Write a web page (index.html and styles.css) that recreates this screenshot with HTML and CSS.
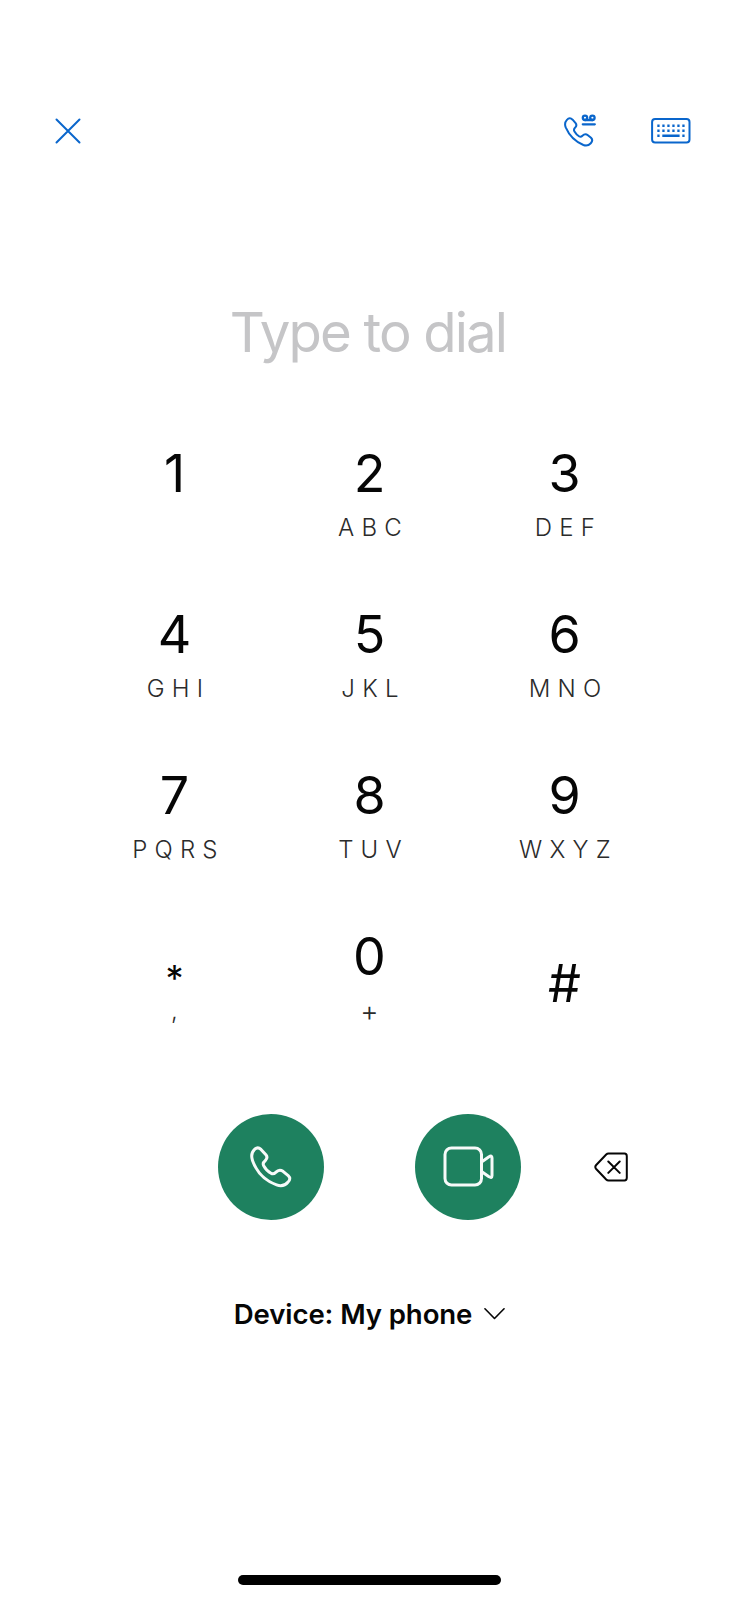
FILE: index.html
```html
<!DOCTYPE html>
<html lang="en">
<head>
  <meta charset="UTF-8" />
  <title>Dialer</title>
  <link rel="stylesheet" href="styles.css">
</head>
<body>
  <header class="toolbar">
    <svg class="icon-close" viewBox="0 0 28 28"><path d="M2.5 2.5 25.5 25.5M25.5 2.5 2.5 25.5"/></svg>
    <svg class="icon-voicemail" viewBox="0 0 34 36">
      <path d="M2.9 6.9 Q5.7 3.9 8.6 6.7 L11.6 10.2 Q13.3 12.4 11.2 14.5 Q9.2 16.4 10.5 18.6 Q12.4 22 15.2 23.4 Q17 24.2 18.4 22.7 Q21.1 20.2 23.9 22.2 L27 24.8 Q29.5 27.4 26.8 30.3 Q23.6 33.6 19.4 32 Q7.2 27 1.7 14.4 Q0 10 2.9 6.9Z"/>
      <g class="tape"><circle cx="21" cy="4.8" r="2.2"/><circle cx="28.4" cy="4.8" r="2.2"/><path d="M21 7H28.6M18.8 11.3H30.8"/></g>
    </svg>
    <svg class="icon-keyboard" viewBox="0 0 40 26">
      <rect x="1.1" y="1.1" width="37.4" height="23.4" rx="3"/>
      <path class="keys" d="M6.3 7.7h2.3M11.3 7.7h2.3M16.3 7.7h2.3M21.3 7.7h2.3M26.3 7.7h2.3M31.3 7.7h2.3M6.3 12.7h2.3M11.3 12.7h2.3M16.3 12.7h2.3M21.3 12.7h2.3M26.3 12.7h2.3M31.3 12.7h2.3M6.3 17.7h2.3M11.3 17.7h17.3M31.3 17.7h2.3"/>
    </svg>
  </header>

  <div class="dial-input">Type to dial</div>

  <main class="keypad">
    <div class="key"><span class="digit">1</span></div>
    <div class="key"><span class="digit">2</span><span class="letters">ABC</span></div>
    <div class="key"><span class="digit">3</span><span class="letters">DEF</span></div>
    <div class="key"><span class="digit">4</span><span class="letters">GHI</span></div>
    <div class="key"><span class="digit">5</span><span class="letters">JKL</span></div>
    <div class="key"><span class="digit">6</span><span class="letters">MNO</span></div>
    <div class="key"><span class="digit">7</span><span class="letters">PQRS</span></div>
    <div class="key"><span class="digit">8</span><span class="letters">TUV</span></div>
    <div class="key"><span class="digit">9</span><span class="letters">WXYZ</span></div>
    <div class="key star"><span class="digit">*</span><span class="letters single">,</span></div>
    <div class="key"><span class="digit">0</span><span class="letters single plus">+</span></div>
    <div class="key hash"><span class="digit">#</span></div>
  </main>

  <div class="actions">
    <div class="call-button">
      <svg class="icon-phone" viewBox="0 0 44 44">
        <path d="M5.6 4.3 Q8.8 1.4 12 4.4 L16.9 9.8 Q19.2 12.6 16.4 15.5 Q13.3 18 14.6 20.6 Q17.4 26 22.4 28.5 Q24.7 29.4 26.7 27.4 Q30.2 23.7 34 26.3 L39.2 30.7 Q42.4 33.8 39.1 37 Q34.4 42.6 27.6 39.9 Q9.8 33.3 3.5 15.4 Q1.2 8.5 5.6 4.3Z"/>
      </svg>
    </div>
    <div class="call-button video">
      <svg class="icon-video" viewBox="0 0 52 42">
        <rect x="2" y="2" width="36.5" height="37" rx="6.5"/>
        <path d="M38.5 16 46 10.7Q49 9 49 12V29.5Q49 32.5 46 30.8L38.5 25.5"/>
      </svg>
    </div>
    <svg class="icon-backspace" viewBox="0 0 36 30">
      <path d="M14.5 1.5H30.5Q32.8 1.5 32.8 4.2V25.8Q32.8 28.5 30.5 28.5H14.5Q13.2 28.5 12.2 27.5L2.2 17Q.4 15 2.2 13L12.2 2.5Q13.2 1.5 14.5 1.5ZM14.3 9.5 25.7 20.9M25.7 9.5 14.3 20.9"/>
    </svg>
  </div>

  <div class="device">
    <span>Device: My phone</span>
    <svg class="icon-chevron" viewBox="0 0 22 14"><path d="M1 1.5 11 11.7 21 1.5"/></svg>
  </div>

  <div class="home-indicator"></div>
</body>
</html>
```
FILE: styles.css
```css
* {
  box-sizing: border-box;
}

body {
  margin: 0;
  width: 739px;
  height: 1600px;
  display: flex;
  flex-direction: column;
  overflow: hidden;
  background: #fff;
  color: #060606;
  font-family: Inter, "Liberation Sans", sans-serif;
}

svg {
  display: block;
  flex: none;
  fill: none;
  stroke: currentColor;
  stroke-width: 2;
  stroke-linecap: round;
  stroke-linejoin: round;
}

.toolbar {
  display: flex;
  align-items: center;
  height: 36px;
  margin-top: 113px;
  padding: 0 48px 0 54px;
  color: #0a66cc;
}

.icon-close {
  width: 28px;
  height: 28px;
}

.icon-voicemail {
  width: 34px;
  height: 36px;
  margin-left: auto;
}

.icon-voicemail .tape {
  stroke-width: 2.3;
}

.icon-keyboard {
  width: 40px;
  height: 26px;
  margin-left: 53px;
}

.icon-keyboard .keys {
  stroke-width: 2.4;
  stroke-linecap: butt;
}

.dial-input {
  margin-top: 148px;
  height: 70px;
  padding-right: 3px;
  line-height: 70px;
  font-size: 54.5px;
  text-align: center;
  letter-spacing: -1.85px;
  color: #c5c5c7;
}

.keypad {
  display: grid;
  grid-template-columns: repeat(3, 195px);
  grid-auto-rows: 161px;
  justify-content: center;
  margin-top: 75px;
}

.key {
  display: flex;
  flex-direction: column;
  align-items: center;
}

.digit {
  height: 64px;
  line-height: 64px;
  font-size: 52px;
}

.letters {
  margin-top: 8px;
  padding-left: 8px;
  line-height: 28px;
  font-size: 24px;
  font-weight: 300;
  letter-spacing: 7.2px;
  color: #2b2b2b;
}

.letters.single {
  padding-left: 0;
  letter-spacing: 0;
}

.letters.plus {
  font-size: 28px;
}

/* the asterisk sits low, right above the comma */
.star .digit {
  height: 72px;
  padding-top: 36px;
  line-height: 34px;
  font-size: 36px;
}

.star .letters {
  margin-top: 0;
}

.hash {
  padding-top: 27px;
}

.actions {
  display: flex;
  align-items: center;
  height: 106px;
  margin-top: 28px;
  padding-left: 218px;
}

.call-button {
  display: flex;
  align-items: center;
  justify-content: center;
  width: 106px;
  height: 106px;
  margin-right: 91px;
  border-radius: 50%;
  background: #1e815f;
  color: #f7faf9;
}

.call-button.video {
  margin-right: 73px;
  padding-left: 2px;
}

.icon-phone {
  width: 44px;
  height: 44px;
  stroke-width: 3;
}

.icon-video {
  width: 52px;
  height: 42px;
  stroke-width: 3;
}

.icon-backspace {
  width: 36px;
  height: 30px;
}

.device {
  display: flex;
  align-items: center;
  justify-content: center;
  gap: 12px;
  height: 40px;
  margin-top: 74px;
  font-size: 27.6px;
  font-weight: 600;
  letter-spacing: -0.1px;
}

.icon-chevron {
  width: 21px;
  height: 14px;
  stroke-width: 1.7;
}

.home-indicator {
  width: 263px;
  height: 10px;
  margin: auto auto 15px;
  border-radius: 5px;
  background: #000;
}
```
